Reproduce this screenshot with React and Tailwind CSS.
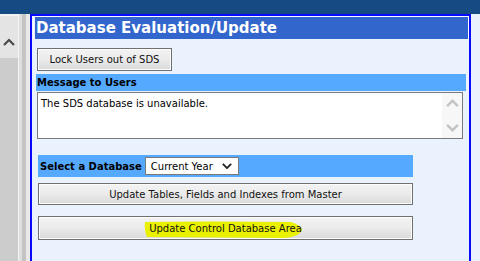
import React from "react";

const btn =
  "flex items-center justify-center border border-[#707070] bg-gradient-to-b from-[#f3f3f3] via-[#ebebeb] to-[#d9d9d9] shadow-[inset_0_0_0_1px_#fcfcfc] text-[10px] text-[#111]";

function Chevron({ up, className, stroke }) {
  return (
    <svg viewBox="0 0 12 7" className={className} fill="none">
      <path
        d={up ? "M1 6 L6 1 L11 6" : "M1 1 L6 6 L11 1"}
        stroke={stroke}
        strokeWidth="2.2"
      />
    </svg>
  );
}

export default function App() {
  return (
    <div className="w-[480px] h-[261px] overflow-hidden flex flex-col bg-[#eaf3fd] font-['DejaVu_Sans',Tahoma,sans-serif]">
      {/* top bar */}
      <div className="h-[14px] bg-[#164a82] shrink-0" />

      <div className="flex flex-1 min-h-0">
        {/* left side strip */}
        <div className="w-[18px] flex flex-col">
          <div className="h-[44px] bg-[#e4e4e4] border-t-2 border-[#f2f2f2] flex justify-center pt-[22px]">
            <Chevron up className="w-[12px] h-[9px]" stroke="#4a4a4a" />
          </div>
          <div className="flex-1 bg-[#cccccc]" />
        </div>
        <div className="w-[1px] bg-[#f4f4f4]" />
        <div className="w-[3px] bg-[#dedede]" />
        <div className="w-[4px] bg-[#c4c4c4]" />
        <div className="w-[4px] bg-[#e9e9e9]" />

        {/* main panel */}
        <div className="w-[441px] border-l-2 border-t-2 border-r-2 border-[#0a0aff] flex flex-col">
          <div className="ml-[1px] border border-b-0 border-[#f8fbff]">
            <div className="ml-[1px] h-[22px] bg-[#3366cc] flex items-center pl-[1px] text-white font-bold text-[15px]">
              Database Evaluation/Update
            </div>
          </div>

          <div className="flex flex-col">
            <div className={`${btn} mt-[9px] ml-[5px] w-[135px] h-[23px]`}>
              Lock Users out of SDS
            </div>

            <div className="mt-[3px] ml-[4px] mr-[3px] h-[17px] bg-[#55aaff] flex items-center pl-[1px] font-bold text-[10px] text-black">
              Message to Users
            </div>

            <div className="mt-[1px] ml-[5px] w-[426px] h-[47px] bg-white border border-[#7a7a7a] flex">
              <div className="flex-1 pl-[3px] pt-[3px] text-[10px] text-black">
                The SDS database is unavailable.
              </div>
              <div className="w-[20px] bg-[#f7f7f7] flex flex-col items-center justify-between py-[6px]">
                <Chevron up className="w-[13px] h-[9px]" stroke="#c4c4c4" />
                <Chevron className="w-[13px] h-[9px]" stroke="#c4c4c4" />
              </div>
            </div>

            <div className="mt-[16px] ml-[6px] w-[375px] h-[22px] bg-[#55aaff] flex items-center pl-[2px]">
              <span className="font-bold text-[10px] text-black">Select a Database</span>
              <div className="ml-[3px] w-[94px] h-[18px] bg-white border border-[#7a7a7a] flex items-center pl-[5px] pr-[6px] text-[10px] text-black">
                <span className="flex-1">Current Year</span>
                <Chevron className="w-[10px] h-[6px]" stroke="#222" />
              </div>
            </div>

            <div className={`${btn} mt-[6px] ml-[6px] w-[375px] h-[22px]`}>
              Update Tables, Fields and Indexes from Master
            </div>

            <div className={`${btn} relative mt-[11px] ml-[6px] w-[375px] h-[24px]`}>
              <svg
                className="absolute left-[104px] top-[3px] w-[160px] h-[19px]"
                viewBox="0 0 160 19"
              >
                <path
                  d="M2 2 Q60 1 148 2 Q158 5 159 10 Q156 17 140 18 L4 17 Q1 10 2 2 Z"
                  fill="#e9f000"
                />
              </svg>
              <span className="relative">Update Control Database Area</span>
            </div>
          </div>
        </div>

        <div className="flex-1 bg-[#eaf3fd]" />
      </div>
    </div>
  );
}
